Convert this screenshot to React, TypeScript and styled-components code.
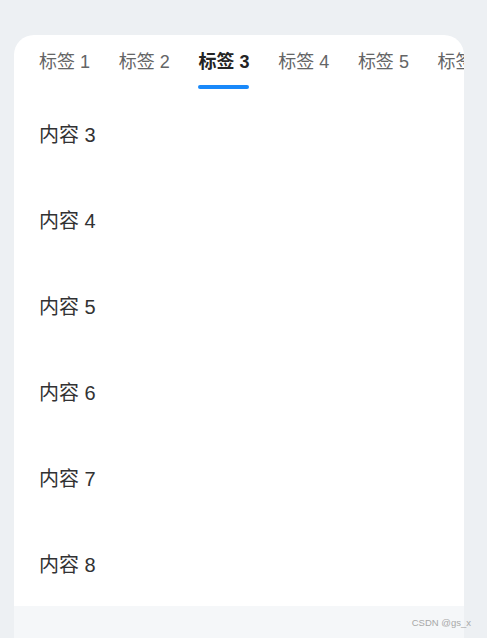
import React from "react";
import styled, { createGlobalStyle } from "styled-components";

const Global = createGlobalStyle`
  html, body { margin: 0; padding: 0; }
  body {
    background: #edf0f3;
    font-family: "Liberation Sans", "Noto Sans CJK SC", sans-serif;
    overflow: hidden;
  }
`;

const Page = styled.div`
  position: relative;
  width: 487px;
  height: 638px;
  padding: 35px 0 0 14px;
  box-sizing: border-box;
  display: flex;
  flex-direction: column;
`;

const Card = styled.div`
  width: 450px;
  background: #fff;
  border-radius: 20px 20px 0 0;
  overflow: hidden;
  display: flex;
  flex-direction: column;
`;

const TabBar = styled.div`
  display: flex;
  gap: 28.7px;
  padding: 15px 0 1px 25px;
  white-space: nowrap;
`;

const Tab = styled.div`
  display: flex;
  flex-direction: column;
  align-items: stretch;
  flex-shrink: 0;
`;

const TabLabel = styled.span<{ $active?: boolean }>`
  font-size: 18px;
  line-height: 24px;
  color: ${(p) => (p.$active ? "#242424" : "#646566")};
  font-weight: ${(p) => (p.$active ? 700 : 400)};
`;

const Indicator = styled.div<{ $active?: boolean }>`
  height: 4px;
  margin-top: 11px;
  border-radius: 2px;
  background: ${(p) => (p.$active ? "#1989fa" : "transparent")};
`;

const Item = styled.div`
  height: 86px;
  display: flex;
  align-items: center;
  padding-left: 25px;
  font-size: 20px;
  color: #323233;
`;

const Footer = styled.div`
  width: 450px;
  flex: 1;
  background: #f5f7f9;
`;

const Watermark = styled.div`
  position: absolute;
  right: 16px;
  bottom: 10px;
  font-size: 9.5px;
  color: #a8a8a8;
  font-family: "Liberation Sans", sans-serif;
`;

const tabs = [1, 2, 3, 4, 5, 6];
const items = [3, 4, 5, 6, 7, 8];

export default function App() {
  return (
    <>
      <Global />
      <Page>
        <Card>
          <TabBar>
            {tabs.map((t) => (
              <Tab key={t}>
                <TabLabel $active={t === 3}>标签 {t}</TabLabel>
                <Indicator $active={t === 3} />
              </Tab>
            ))}
          </TabBar>
          {items.map((i) => (
            <Item key={i}>内容 {i}</Item>
          ))}
        </Card>
        <Footer />
        <Watermark>CSDN @gs_x</Watermark>
      </Page>
    </>
  );
}
